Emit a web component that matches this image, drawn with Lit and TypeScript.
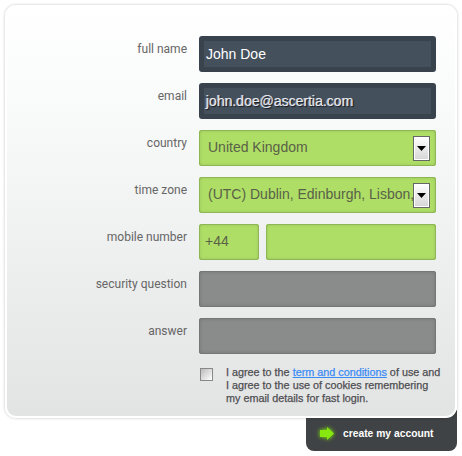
import { LitElement, html, css } from "lit";
import { customElement } from "lit/decorators.js";

const ARROW = html`<svg width="9" height="5" viewBox="0 0 9 5"><path d="M0 0H9L4.5 5Z" fill="#000"/></svg>`;

@customElement("app-root")
export class AppRoot extends LitElement {
  static styles = css`
    :host { display: block; width: 462px; height: 456px; overflow: hidden; background: #fff; font-family: "Liberation Sans", Arial, sans-serif; }
    .page { display: flex; flex-direction: column; padding: 5px 5px 0 5px; }
    .card { position: relative; z-index: 1; box-sizing: border-box; width: 452px; height: 413px; border: 2px solid #fff; border-radius: 11px;
      box-shadow: 0 0 3px rgba(0,0,0,.25); background: linear-gradient(#ffffff 0%, #f9fafa 25%, #e2e3e3 100%); padding: 29px 0 0 0; }
    .rows { display: grid; grid-template-columns: 180px 237px; column-gap: 12px; row-gap: 11px; grid-auto-rows: 36px; }
    label { font: 12px/1 Roboto, sans-serif; color: #666; text-align: right; padding-top: 7px; }
    .f { box-sizing: border-box; height: 36px; width: 100%; border-radius: 3px; display: flex; align-items: center; font: 14px "Liberation Sans", Arial, sans-serif; min-width: 0; }
    .dark { background: #44505c; border: 5px solid #39434d; color: #fff; padding-left: 2px; }
    .shadow { text-shadow: 1px 1px 1px #12171c, -1px 0 0 #aab; color: #e8ebf0; }
    .green { background: #aede66; box-shadow: inset 0 0 0 1px #8fb655, inset 0 0 3px 1px #9cc45c; color: #5a6148; padding: 0 0 2px 9px; justify-content: space-between; }
    .green .t { white-space: nowrap; overflow: hidden; flex: 1; min-width: 0; }
    .num { padding-left: 6px; }
    .grey { background: #8a8c8b; box-shadow: inset 0 0 0 1px #757777, inset 0 0 3px 2px #7e807f; }
    .btn { flex: none; box-sizing: border-box; width: 17px; height: 25px; margin: 2px 6px 0 0; border: 1px solid #666; outline: 1px solid #fff; outline-offset: -2px; background: linear-gradient(#fff, #d5d5d5); display: flex; align-items: center; justify-content: center; }
    .phone { display: flex; gap: 7px; }
    .cc { width: 60px; flex: none; }
    .agree { display: flex; margin: 11px 0 0 192px; }
    .box { flex: none; box-sizing: border-box; width: 13px; height: 13px; margin: 3px 13px 0 1px; border: 1px solid #888; background: linear-gradient(135deg, #bbb, #fff); }
    .agree p { margin: 1px 0 0; font: 10.8px/13px "Liberation Sans", Arial, sans-serif; color: #4e4e52; -webkit-text-stroke: 0.25px #4e4e52; width: 222px; }
    a { color: #3a8cf5; -webkit-text-stroke: 0.25px #3a8cf5; }
    .submit { box-sizing: border-box; align-self: flex-end; width: 151px; height: 41px; margin-top: -8px; padding: 5px 0 0 14px; background: #404345; border-radius: 0 0 8px 8px; display: flex; align-items: center; gap: 9px; color: #fff; font: bold 10.3px "Liberation Sans", Arial, sans-serif; }
    .submit svg { filter: drop-shadow(0 0 2px #8f0); }
  `;

  render() {
    return html`<div class="page">
      <div class="card">
        <div class="rows">
          <label>full name</label><div class="f dark">John Doe</div>
          <label>email</label><div class="f dark"><span class="shadow">john.doe@ascertia.com</span></div>
          <label>country</label><div class="f green"><span class="t">United Kingdom</span><span class="btn">${ARROW}</span></div>
          <label>time zone</label><div class="f green"><span class="t">(UTC) Dublin, Edinburgh, Lisbon,</span><span class="btn">${ARROW}</span></div>
          <label>mobile number</label><div class="phone"><div class="f green num cc">+44</div><div class="f green"></div></div>
          <label>security question</label><div class="f grey"></div>
          <label>answer</label><div class="f grey"></div>
        </div>
        <div class="agree">
          <span class="box"></span>
          <p>I agree to the <a href="#">term and conditions</a> of use and<br />I agree to the use of cookies remembering<br />my email details for fast login.</p>
        </div>
      </div>
      <div class="submit">
        <svg width="14" height="13" viewBox="0 0 14 13"><path d="M0 3H7V0L14 6.5L7 13V10H0Z" fill="#86e80f"/></svg>
        <span>create my account</span>
      </div>
    </div>`;
  }
}
